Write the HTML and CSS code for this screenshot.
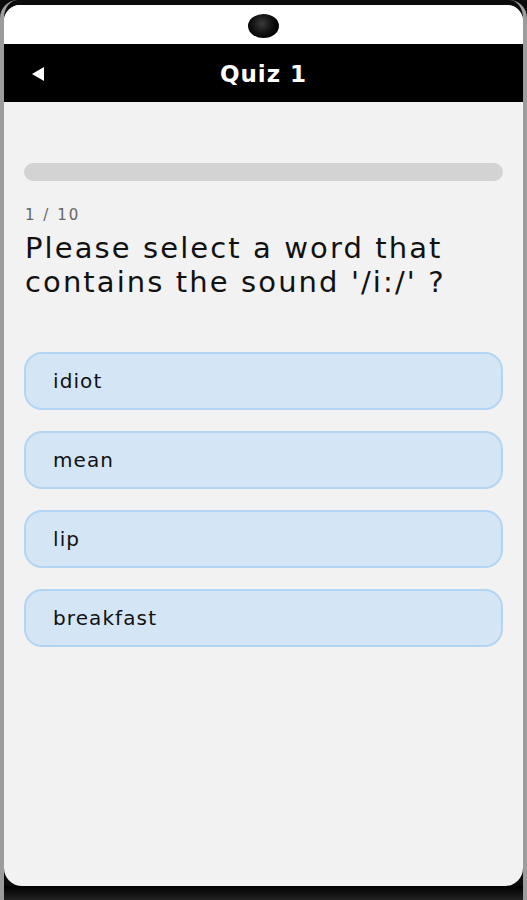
FILE: index.html
```html
<!DOCTYPE html>
<html lang="en">
<head>
<meta charset="utf-8">
<title>Quiz 1</title>
<link rel="stylesheet" href="styles.css">
</head>
<body>
<div class="device">
  <div class="screen">
    <div class="notch"><span class="camera"></span></div>
    <header class="appbar">
      <button class="back" aria-label="Back">
        <svg width="13" height="14" viewBox="0 0 13 14"><polygon points="0,7 12,0 12,14" fill="#fff"/></svg>
      </button>
      <h1 class="title">Quiz 1</h1>
    </header>
    <main class="content">
      <div class="progress"><div class="progress-fill" style="width:0%"></div></div>
      <div class="counter">1 / 10</div>
      <p class="question">Please select a word that contains the sound '/i:/' ?</p>
      <div class="options">
        <button class="option">idiot</button>
        <button class="option">mean</button>
        <button class="option">lip</button>
        <button class="option">breakfast</button>
      </div>
    </main>
  </div>
  <div class="chin"></div>
</div>
</body>
</html>
```

FILE: styles.css
```css
* { box-sizing: border-box; }
html, body { margin: 0; padding: 0; }
body {
  width: 527px;
  height: 900px;
  background: #0b0b0b;
  font-family: "DejaVu Sans", Verdana, sans-serif;
  overflow: hidden;
}
.device {
  width: 527px;
  height: 900px;
  display: flex;
  flex-direction: column;
  padding: 5px 0 0;
  background: #0b0b0b;
  border-left: 4px solid #9c9c9c;
  border-right: 4px solid #9c9c9c;
  border-radius: 18px 18px 0 0;
}
.screen {
  flex: 0 0 881px;
  display: flex;
  flex-direction: column;
  background: #f2f2f2;
  border-radius: 16px 16px 18px 18px;
  overflow: hidden;
}
.notch {
  height: 39px;
  background: #ffffff;
  display: flex;
  align-items: center;
  justify-content: center;
}
.camera {
  width: 31px;
  height: 24px;
  border-radius: 50%;
  background: radial-gradient(circle at 45% 40%, #3a3a3a 0, #151515 40%, #000 70%);
  margin-top: 3px;
}
.appbar {
  height: 58px;
  background: #000;
  display: flex;
  align-items: center;
  justify-content: center;
  position: relative;
}
.back {
  position: absolute;
  left: 28px;
  top: 23px;
  padding: 0;
  border: 0;
  background: none;
  line-height: 0;
}
.title {
  margin: 0;
  color: #fff;
  font-size: 23px;
  font-weight: 700;
  letter-spacing: 1px;
  margin-top: 2px;
}
.content {
  flex: 1;
  padding: 61px 20px 0 20px;
}
.progress {
  height: 18px;
  border-radius: 9px;
  background: #d3d3d3;
  overflow: hidden;
}
.progress-fill { height: 100%; background: #4a90e2; }
.counter {
  margin-top: 25px;
  padding-left: 1px;
  font-size: 15px;
  line-height: 19px;
  letter-spacing: 2px;
  color: #666;
}
.question {
  margin: 6px 0 0;
  padding-left: 1px;
  font-size: 29px;
  line-height: 34px;
  letter-spacing: 2.1px;
  color: #111;
  padding-right: 10px;
}
.options {
  margin-top: 53px;
  display: flex;
  flex-direction: column;
  gap: 21px;
}
.option {
  height: 58px;
  border: 2px solid #b3d5f4;
  background: #d4e6f5;
  border-radius: 18px;
  text-align: left;
  padding: 0 0 0 27px;
  font-family: "DejaVu Sans", Verdana, sans-serif;
  font-size: 20px;
  letter-spacing: 1.1px;
  color: #111;
}
.chin {
  flex: 1;
  background: linear-gradient(#000, #222);
}
```
